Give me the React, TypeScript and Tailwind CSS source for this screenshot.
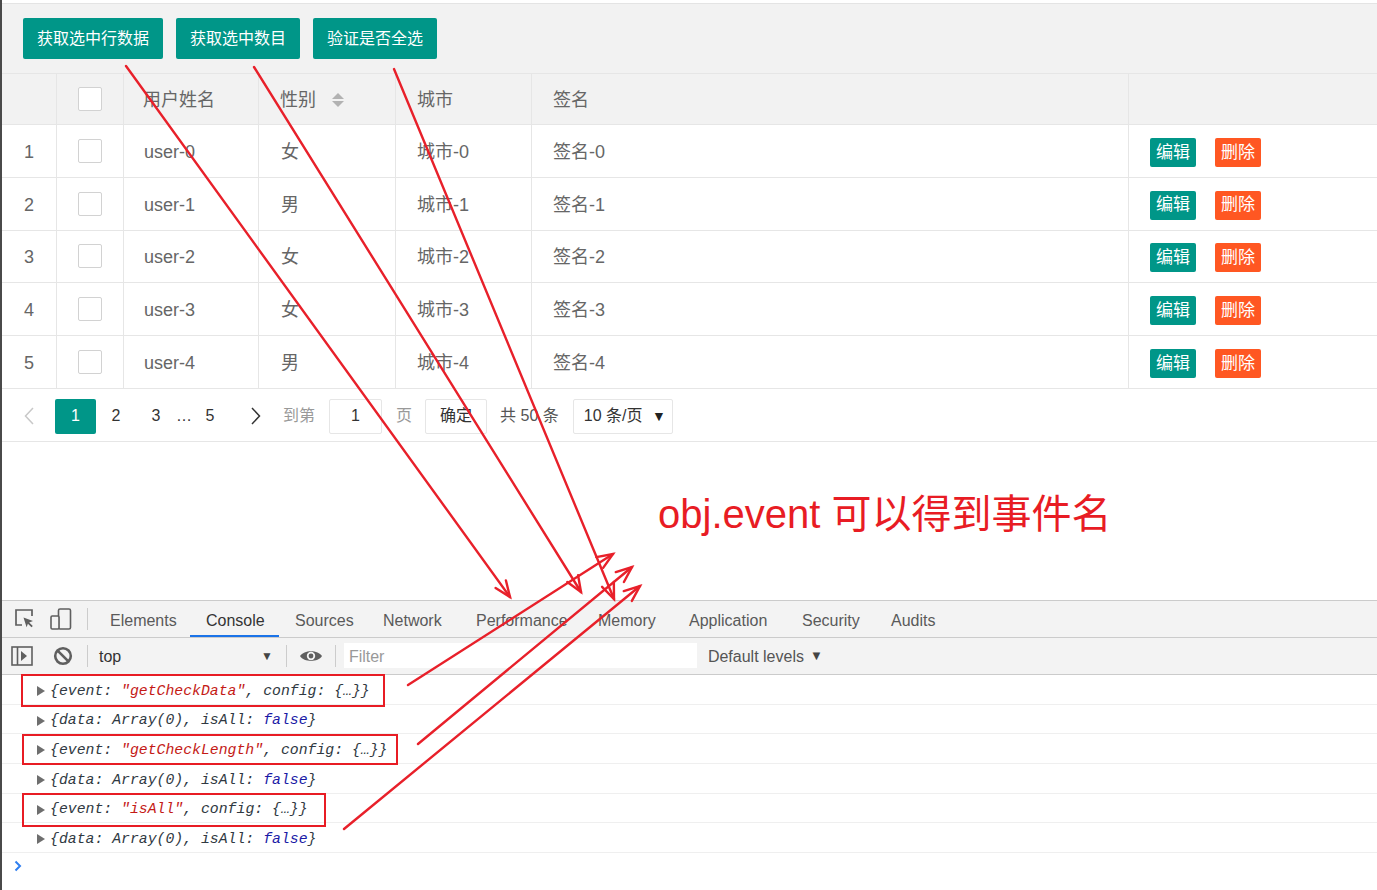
import React from "react";

const rows = [
  { n: 1, user: "user-0", sex: "女", city: "城市-0", sign: "签名-0" },
  { n: 2, user: "user-1", sex: "男", city: "城市-1", sign: "签名-1" },
  { n: 3, user: "user-2", sex: "女", city: "城市-2", sign: "签名-2" },
  { n: 4, user: "user-3", sex: "女", city: "城市-3", sign: "签名-3" },
  { n: 5, user: "user-4", sex: "男", city: "城市-4", sign: "签名-4" },
];

const tabs = [
  { label: "Elements", w: "w-[96px]" },
  { label: "Console", w: "w-[89px]" },
  { label: "Sources", w: "w-[88px]" },
  { label: "Network", w: "w-[93px]" },
  { label: "Performance", w: "w-[122px]" },
  { label: "Memory", w: "w-[91px]" },
  { label: "Application", w: "w-[113px]" },
  { label: "Security", w: "w-[89px]" },
  { label: "Audits", w: "w-[80px]" },
];

// red annotation arrows: [x1, y1, x2 (tip), y2 (tip)]
const arrows: [number, number, number, number][] = [
  [126, 66, 510, 597],
  [254, 67, 581, 592],
  [394, 69, 614, 599],
  [408, 685, 613, 554],
  [418, 744, 632, 567],
  [344, 829, 640, 586],
];

function head(x1: number, y1: number, x2: number, y2: number) {
  const len = Math.hypot(x2 - x1, y2 - y1);
  const ux = (x2 - x1) / len;
  const uy = (y2 - y1) / len;
  const L = 17;
  const a = (22 * Math.PI) / 180;
  const pt = (s: number) => {
    const c = Math.cos(s * a);
    const sn = Math.sin(s * a);
    const rx = ux * c - uy * sn;
    const ry = ux * sn + uy * c;
    return `${x2 - rx * L},${y2 - ry * L}`;
  };
  return `${pt(1)} ${x2},${y2} ${pt(-1)}`;
}

function Checkbox() {
  return <span className="block h-[24px] w-[24px] rounded-[2px] border border-[#d2d2d2] bg-white" />;
}

function Cell({ children, className = "" }: { children?: React.ReactNode; className?: string }) {
  return <div className={`flex items-center border-r border-[#e6e6e6] ${className}`}>{children}</div>;
}

function Tri() {
  return (
    <svg width="8" height="10" viewBox="0 0 8 10" className="mr-[5px] shrink-0">
      <path d="M0 0 L8 5 L0 10 Z" fill="#6e6e6e" />
    </svg>
  );
}

export default function App() {
  const cols = "grid grid-cols-[55px_67px_135px_137px_136px_597px_1fr]";
  return (
    <div className="relative h-[890px] w-[1377px] overflow-hidden border-l-2 border-[#4a4a4a] bg-white font-['Liberation_Sans','Noto_Sans_CJK_SC',sans-serif] text-[#666]">
      {/* toolbar */}
      <div className="pt-[3px]">
        <div className="flex h-[70px] gap-[13px] border-t border-[#e4e4e4] bg-[#f2f2f2] pl-[21px] pt-[14px]">
          {["获取选中行数据", "获取选中数目", "验证是否全选"].map((t) => (
            <button key={t} className="h-[41px] rounded-[2px] bg-[#009688] px-[14px] pt-[1px] text-[16px] text-white">
              {t}
            </button>
          ))}
        </div>
      </div>

      {/* header */}
      <div className={`${cols} h-[52px] border-y border-[#e6e6e6] bg-[#f2f2f2] text-[18px]`}>
        <Cell />
        <Cell className="justify-center">
          <Checkbox />
        </Cell>
        <Cell className="pl-[19px] pt-[2px]">用户姓名</Cell>
        <Cell className="pl-[21px] pt-[2px]">
          性别
          <svg width="14" height="16" viewBox="0 0 14 16" className="ml-[15px]">
            <path d="M1 7 L7 1 L13 7 Z" fill="#b2b2b2" />
            <path d="M1 9 L7 15 L13 9 Z" fill="#b2b2b2" />
          </svg>
        </Cell>
        <Cell className="pl-[21px] pt-[2px]">城市</Cell>
        <Cell className="pl-[21px] pt-[2px]">签名</Cell>
        <div />
      </div>

      {/* rows */}
      {rows.map((r) => (
        <div key={r.n} className={`${cols} h-[52.8px] border-b border-[#e6e6e6] text-[18px]`}>
          <Cell className="justify-center pt-[3px]">{r.n}</Cell>
          <Cell className="justify-center">
            <Checkbox />
          </Cell>
          <Cell className="pl-[20px] pt-[3px]">{r.user}</Cell>
          <Cell className="pl-[22px] pt-[3px]">{r.sex}</Cell>
          <Cell className="pl-[21px] pt-[3px]">{r.city}</Cell>
          <Cell className="pl-[21px] pt-[3px]">{r.sign}</Cell>
          <div className="flex items-center gap-[19px] pl-[21px] pt-[3px]">
            <span className="flex h-[29px] w-[46px] items-center justify-center rounded-[2px] bg-[#009688] text-[17px] text-white">
              编辑
            </span>
            <span className="flex h-[29px] w-[46px] items-center justify-center rounded-[2px] bg-[#ff5722] text-[17px] text-white">
              删除
            </span>
          </div>
        </div>
      ))}

      {/* pagination */}
      <div className="flex h-[53px] items-center border-b border-[#e6e6e6] pt-[3px] text-[16px] text-[#333]">
        <div className="flex w-[53px] justify-center">
          <svg width="10" height="18" viewBox="0 0 10 18">
            <path d="M9 1 L1.5 9 L9 17" fill="none" stroke="#c8c8c8" strokeWidth="1.5" />
          </svg>
        </div>
        <span className="flex h-[35px] w-[41px] items-center justify-center rounded-[2px] bg-[#009688] text-white">1</span>
        <span className="w-[40px] text-center">2</span>
        <span className="w-[40px] text-center">3</span>
        <span className="w-[15px] text-center">…</span>
        <span className="w-[38px] text-center">5</span>
        <div className="flex w-[54px] justify-center">
          <svg width="10" height="18" viewBox="0 0 10 18">
            <path d="M1 1 L8.5 9 L1 17" fill="none" stroke="#333" strokeWidth="1.5" />
          </svg>
        </div>
        <span className="text-[#999]">到第</span>
        <span className="ml-[14px] flex h-[35px] w-[53px] items-center justify-center rounded-[2px] border border-[#e6e6e6] bg-white">
          1
        </span>
        <span className="ml-[14px] text-[#999]">页</span>
        <span className="ml-[13px] flex h-[35px] w-[62px] items-center justify-center rounded-[2px] border border-[#e6e6e6] bg-white">
          确定
        </span>
        <span className="ml-[13px] text-[#555]">共 50 条</span>
        <span className="ml-[14px] flex h-[35px] w-[100px] items-center justify-between rounded-[2px] border border-[#e6e6e6] bg-white pl-[10px] pr-[6px]">
          <span>10 条/页</span>
          <span className="text-[14px] text-[#222]">▼</span>
        </span>
      </div>

      {/* annotation */}
      <div className="h-[158px] pl-[656px] pt-[48px]">
        <span className="text-[40px] leading-[48px] text-[#e81c24]">obj.event 可以得到事件名</span>
      </div>

      {/* devtools tabs */}
      <div className="flex h-[38px] items-stretch border-y border-[#cbcbcb] bg-[#f3f3f3] text-[16px] text-[#5a5a5a]">
        <div className="flex w-[92px] items-center">
          <svg width="22" height="22" viewBox="0 0 22 22" className="ml-[12px]">
            <path d="M8 17 H2 V2 H18 V8" fill="none" stroke="#5f5f5f" strokeWidth="1.7" />
            <path d="M9.5 9.5 L19 13 L15.2 14.4 L18.8 18 L17.5 19.3 L13.9 15.7 L12.6 19.2 Z" fill="#5f5f5f" />
          </svg>
          <svg width="22" height="22" viewBox="0 0 22 22" className="ml-[14px]">
            <rect x="8.5" y="1" width="12" height="20" rx="1.5" fill="none" stroke="#5f5f5f" strokeWidth="1.6" />
            <rect x="1" y="8" width="8" height="13" rx="1.2" fill="#f3f3f3" stroke="#5f5f5f" strokeWidth="1.6" />
          </svg>
          <span className="ml-[15px] h-[22px] w-px bg-[#cccccc]" />
        </div>
        {tabs.map((t) => (
          <div
            key={t.label}
            className={`${t.w} flex items-center pl-[16px] ${
              t.label === "Console" ? "border-b-2 border-[#1a73e8] pt-[6px] text-[#333]" : "pt-[4px]"
            }`}
          >
            {t.label}
          </div>
        ))}
      </div>

      {/* console toolbar */}
      <div className="flex h-[37px] items-center border-b border-[#cbcbcb] bg-[#f3f3f3] text-[16px] text-[#333]">
        <svg width="22" height="20" viewBox="0 0 22 20" className="ml-[9px]">
          <rect x="1" y="1" width="20" height="18" fill="none" stroke="#5f5f5f" strokeWidth="1.6" />
          <path d="M6.5 1 V19" stroke="#5f5f5f" strokeWidth="1.6" />
          <path d="M10 5 L16 10 L10 15 Z" fill="#5f5f5f" />
        </svg>
        <svg width="20" height="20" viewBox="0 0 20 20" className="ml-[20px]">
          <circle cx="10" cy="10" r="7.8" fill="none" stroke="#5f5f5f" strokeWidth="2.6" />
          <path d="M4.6 4.6 L15.4 15.4" stroke="#5f5f5f" strokeWidth="2.6" />
        </svg>
        <span className="ml-[14px] h-[22px] w-px bg-[#cccccc]" />
        <span className="ml-[11px] w-[162px] pt-[2px]">top</span>
        <span className="text-[12px] text-[#444]">▼</span>
        <span className="ml-[13px] h-[22px] w-px bg-[#cccccc]" />
        <svg width="24" height="16" viewBox="0 0 24 16" className="ml-[12px]">
          <path d="M1 8 C5 1.5 19 1.5 23 8 C19 14.5 5 14.5 1 8 Z" fill="#5f5f5f" />
          <circle cx="12" cy="8" r="4.2" fill="#f3f3f3" />
          <circle cx="12" cy="8" r="2.4" fill="#5f5f5f" />
        </svg>
        <span className="ml-[12px] h-[22px] w-px bg-[#cccccc]" />
        <div className="ml-[8px] flex h-[25px] w-[353px] items-center bg-white pl-[5px] pt-[2px] text-[#999]">Filter</div>
        <span className="ml-[11px] pt-[2px] text-[#555]">Default levels</span>
        <span className="ml-[6px] text-[13px] text-[#444]">▼</span>
      </div>

      {/* console messages */}
      <div className="font-['Liberation_Mono',monospace] text-[14.8px] italic text-[#303942]">
        {[0, 1, 2].map((i) => (
          <React.Fragment key={i}>
            <div className="flex h-[29.7px] items-center border-b border-[#efefef] pl-[35px] pt-[3px]">
              <Tri />
              <span>
                {"{event: "}
                <span className="text-[#c41a16]">
                  {i === 0 ? '"getCheckData"' : i === 1 ? '"getCheckLength"' : '"isAll"'}
                </span>
                {", config: {…}}"}
              </span>
            </div>
            <div className="flex h-[29.7px] items-center border-b border-[#efefef] pl-[35px] pt-[3px]">
              <Tri />
              <span>
                {"{data: Array(0), isAll: "}
                <span className="text-[#1a1aa6]">false</span>
                {"}"}
              </span>
            </div>
          </React.Fragment>
        ))}
        <div className="flex h-[26px] items-center pl-[12px]">
          <svg width="8" height="12" viewBox="0 0 8 12">
            <path d="M1.5 1.5 L6 6 L1.5 10.5" fill="none" stroke="#2f7ff0" strokeWidth="2" />
          </svg>
        </div>
      </div>

      {/* red annotations over the page */}
      <svg className="pointer-events-none absolute left-[-2px] top-0" width={1377} height={890}>
        <rect x="22" y="675" width="362" height="31" fill="none" stroke="#e81c24" strokeWidth="2" />
        <rect x="23" y="735" width="374" height="29" fill="none" stroke="#e81c24" strokeWidth="2" />
        <rect x="23" y="794" width="302" height="32" fill="none" stroke="#e81c24" strokeWidth="2" />
        {arrows.map(([x1, y1, x2, y2], i) => (
          <g key={i} stroke="#e8202a" strokeWidth="2.4" fill="none" strokeLinecap="round">
            <line x1={x1} y1={y1} x2={x2} y2={y2} />
            <polyline points={head(x1, y1, x2, y2)} />
          </g>
        ))}
      </svg>
    </div>
  );
}
